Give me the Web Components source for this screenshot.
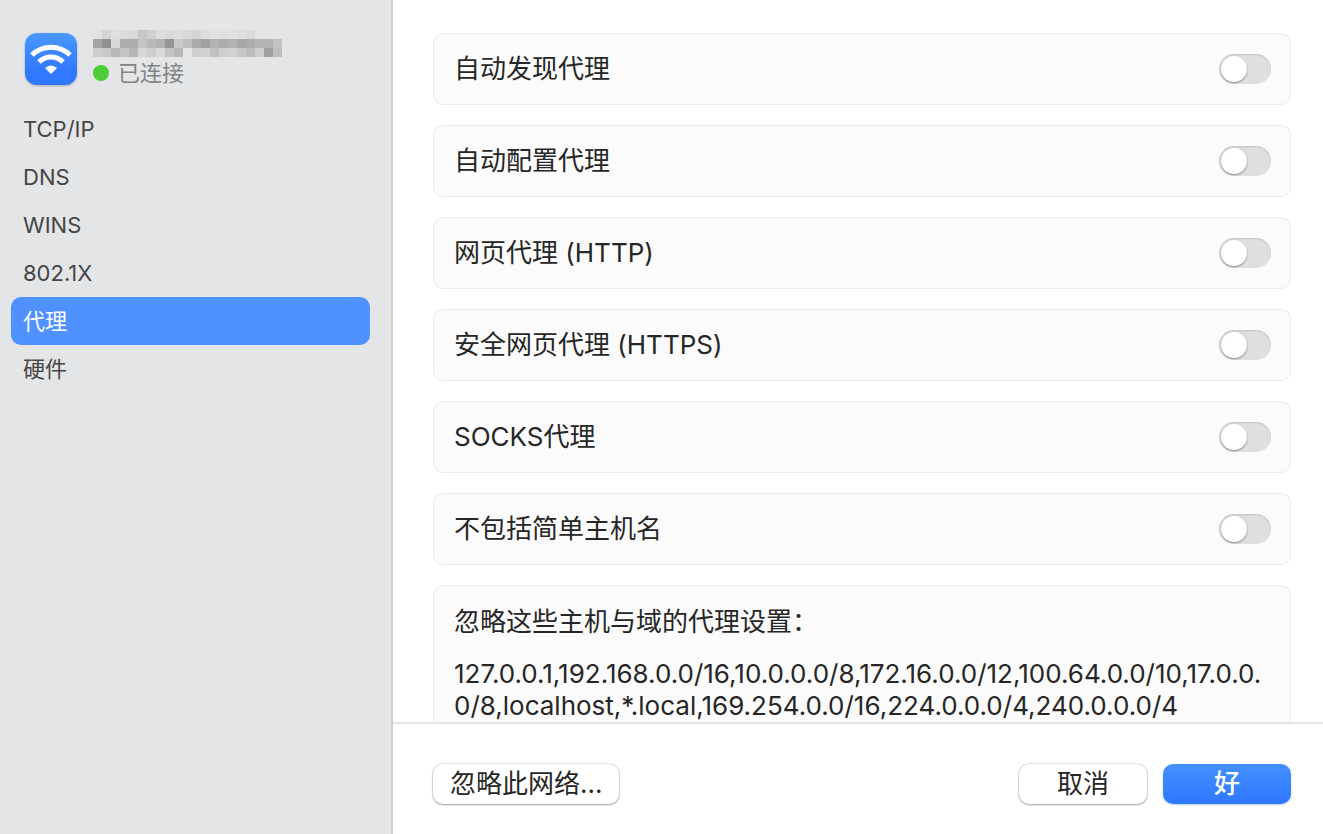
<!DOCTYPE html>
<html lang="zh-CN">
<head>
<meta charset="utf-8">
<title>代理</title>
<style>
  html, body {
    height: 100%;
    margin: 0;
  }

  body {
    font-family: Inter, "Noto Sans CJK SC", sans-serif;
    color: #262626;
    background: #fff;
  }
</style>
</head>
<body>

<settings-window>
  <network-header slot="sidebar" status="已连接"></network-header>
  <side-nav slot="sidebar">
    <nav-item href="#tcpip">TCP/IP</nav-item>
    <nav-item href="#dns">DNS</nav-item>
    <nav-item href="#wins">WINS</nav-item>
    <nav-item href="#8021x">802.1X</nav-item>
    <nav-item href="#proxies" selected>代理</nav-item>
    <nav-item href="#hardware">硬件</nav-item>
  </side-nav>

  <toggle-row label="自动发现代理"></toggle-row>
  <toggle-row label="自动配置代理"></toggle-row>
  <toggle-row label="网页代理 (HTTP)"></toggle-row>
  <toggle-row label="安全网页代理 (HTTPS)"></toggle-row>
  <toggle-row label="SOCKS代理"></toggle-row>
  <toggle-row label="不包括简单主机名"></toggle-row>
  <bypass-hosts label="忽略这些主机与域的代理设置："
    value="127.0.0.1,192.168.0.0/16,10.0.0.0/8,172.16.0.0/12,100.64.0.0/10,17.0.0.0/8,localhost,*.local,169.254.0.0/16,224.0.0.0/4,240.0.0.0/4"></bypass-hosts>

  <push-button slot="footer-start">忽略此网络...</push-button>
  <push-button slot="footer-end">取消</push-button>
  <push-button slot="footer-end" primary>好</push-button>
</settings-window>

<script>
class SettingsWindow extends HTMLElement {
  constructor() {
    super();
    this.attachShadow({ mode: "open" }).innerHTML = `
      <style>
        :host { display: flex; height: 100vh; overflow: hidden; }
        aside {
          box-sizing: border-box;
          flex: 0 0 393px;
          padding: 32px 21px 0 11px;
          background: #e4e5e7;
          border-right: 2px solid #cfd0d2;
        }
        .pane { flex: 1; min-width: 0; display: flex; flex-direction: column; }
        main {
          flex: 1;
          min-height: 0;
          overflow: hidden;
          display: flex;
          flex-direction: column;
          gap: 20px;
          padding: 33px 32px 0 40px;
        }
        footer {
          display: flex;
          align-items: center;
          justify-content: space-between;
          padding: 40px 32px 30px 40px;
          border-top: 2px solid #e4e4e4;
        }
        .end { display: flex; gap: 16px; }
      </style>
      <aside><slot name="sidebar"></slot></aside>
      <div class="pane">
        <main><slot></slot></main>
        <footer>
          <slot name="footer-start"></slot>
          <div class="end"><slot name="footer-end"></slot></div>
        </footer>
      </div>
    `;
  }
}
customElements.define("settings-window", SettingsWindow);


/******************************
 * Network badge, masked name and status
 ******************************/
class NetworkHeader extends HTMLElement {
  // Grey level of each 9px tile of the masked name, row by row
  static mask = [
    [224, 212, 222, 220, 216, 200, 208, 222, 218, 222, 216, 212, 222, 226, 224, 226, 222, 218, 228, 228, 228],
    [164, 144, 216, 172, 172, 196, 186, 178, 150, 200, 190, 170, 160, 178, 172, 178, 168, 172, 180, 180, 196],
    [206, 200, 184, 196, 182, 214, 206, 218, 196, 184, 228, 206, 210, 192, 206, 210, 198, 188, 206, 160, 190]
  ];

  connectedCallback() {
    const tiles = NetworkHeader.mask.map((row, y) => row.map((v, x) =>
      `<rect x="${x * 9}" y="${y * 9}" width="9" height="9" fill="rgb(${v},${v},${v})"/>`
    ).join("")).join("");

    this.attachShadow({ mode: "open" }).innerHTML = `
      <style>
        :host { display: flex; gap: 16px; padding-left: 14px; }
        .badge { display: block; margin-top: 1px; filter: drop-shadow(0 1px 1px rgba(0,0,0,.25)); }
        .mask { display: block; margin-top: -2px; }
        .status {
          display: flex;
          align-items: center;
          gap: 9px;
          font-size: 22px;
          line-height: 32px;
          color: #828384;
        }
        .dot { width: 16px; height: 16px; border-radius: 50%; background: #4ccd37; }
      </style>
      <svg class="badge" width="52" height="52" viewBox="0 0 52 52" aria-hidden="true">
        <defs>
          <linearGradient id="blue" x1="0" y1="0" x2="0" y2="1">
            <stop offset="0" stop-color="#4a98ff"/>
            <stop offset=".75" stop-color="#2f78ff"/>
          </linearGradient>
        </defs>
        <rect width="52" height="52" rx="12" fill="url(#blue)"/>
        <g fill="none" stroke="#fff" stroke-width="5">
          <path d="M7 22 A27 27 0 0 1 45 22"/>
          <path d="M14 29 A17 17 0 0 1 38 29"/>
        </g>
        <path fill="#fff" d="M20 35 Q26 30 32 35 L26 41 Z"/>
      </svg>
      <div>
        <svg class="mask" width="189" height="27" aria-hidden="true">${tiles}</svg>
        <div class="status"><span class="dot"></span>${this.getAttribute("status")}</div>
      </div>
    `;
  }
}
customElements.define("network-header", NetworkHeader);


/******************************
 * Sidebar navigation
 ******************************/
class SideNav extends HTMLElement {
  constructor() {
    super();
    this.attachShadow({ mode: "open" }).innerHTML = `
      <style>
        :host { display: block; margin-top: 16px; }
        nav { display: flex; flex-direction: column; }
      </style>
      <nav><slot></slot></nav>
    `;
  }
}
customElements.define("side-nav", SideNav);

class NavItem extends HTMLElement {
  connectedCallback() {
    this.attachShadow({ mode: "open" }).innerHTML = `
      <style>
        :host { display: block; }
        a {
          display: block;
          padding: 0 12px;
          border-radius: 10px;
          font-size: 22px;
          line-height: 48px;
          color: #454546;
          text-decoration: none;
        }
        :host([selected]) a { background: #4f91ff; color: #fff; }
      </style>
      <a href="${this.getAttribute("href")}"><slot></slot></a>
    `;
  }
}
customElements.define("nav-item", NavItem);


/******************************
 * Cards
 ******************************/
const cardStyle = `
  :host {
    display: block;
    flex: none;
    box-sizing: border-box;
    border: 1px solid #ebebeb;
    border-radius: 10px;
    background: #fbfbfb;
    font-size: 26px;
  }
`;

class ToggleRow extends HTMLElement {
  connectedCallback() {
    this.attachShadow({ mode: "open" }).innerHTML = `
      <style>
        ${cardStyle}
        label {
          display: flex;
          align-items: center;
          justify-content: space-between;
          padding: 0 19px 0 20px;
          line-height: 70px;
        }
        input {
          appearance: none;
          display: flex;
          box-sizing: border-box;
          width: 52px;
          height: 30px;
          margin: 0;
          padding: 2px;
          border-radius: 15px;
          background: #dfdfdf;
          box-shadow: inset 0 1px 2px rgba(0,0,0,.14);
        }
        input::before {
          content: "";
          width: 26px;
          height: 26px;
          border-radius: 50%;
          background: #fff;
          box-shadow: 0 1px 2px rgba(0,0,0,.4);
        }
        input:checked { background: #2f78ff; justify-content: flex-end; }
      </style>
      <label>${this.getAttribute("label")}<input type="checkbox" role="switch"></label>
    `;
  }
}
customElements.define("toggle-row", ToggleRow);

class BypassHosts extends HTMLElement {
  connectedCallback() {
    this.attachShadow({ mode: "open" }).innerHTML = `
      <style>
        ${cardStyle}
        :host { padding: 20px 19px 20px 20px; }
        label { display: block; line-height: 32px; }
        textarea {
          display: block;
          box-sizing: border-box;
          width: 100%;
          margin: 20px 0 0;
          padding: 0;
          border: 0;
          outline: 0;
          resize: none;
          overflow: hidden;
          background: none;
          color: inherit;
          font: inherit;
          line-height: 32px;
          word-break: break-all;
        }
      </style>
      <label for="hosts">${this.getAttribute("label")}</label>
      <textarea id="hosts" rows="2" spellcheck="false">${this.getAttribute("value")}</textarea>
    `;
  }
}
customElements.define("bypass-hosts", BypassHosts);


/******************************
 * Buttons
 ******************************/
class PushButton extends HTMLElement {
  connectedCallback() {
    this.attachShadow({ mode: "open" }).innerHTML = `
      <style>
        :host { display: block; }
        button {
          display: block;
          min-width: 128px;
          height: 40px;
          padding: 0 17px;
          border: 0;
          border-radius: 10px;
          background: #fff;
          box-shadow: 0 0 1px 1px rgba(0,0,0,.1), 0 1px 2px rgba(0,0,0,.3);
          color: inherit;
          font: inherit;
          font-size: 26px;
          line-height: 40px;
        }
        :host([primary]) button {
          background: linear-gradient(#4490ff, #2d78ff);
          box-shadow: 0 1px 2px rgba(45,120,255,.35);
          color: #fff;
          font-weight: 500;
        }
      </style>
      <button type="button"><slot></slot></button>
    `;
  }
}
customElements.define("push-button", PushButton);
</script>
</body>
</html>
